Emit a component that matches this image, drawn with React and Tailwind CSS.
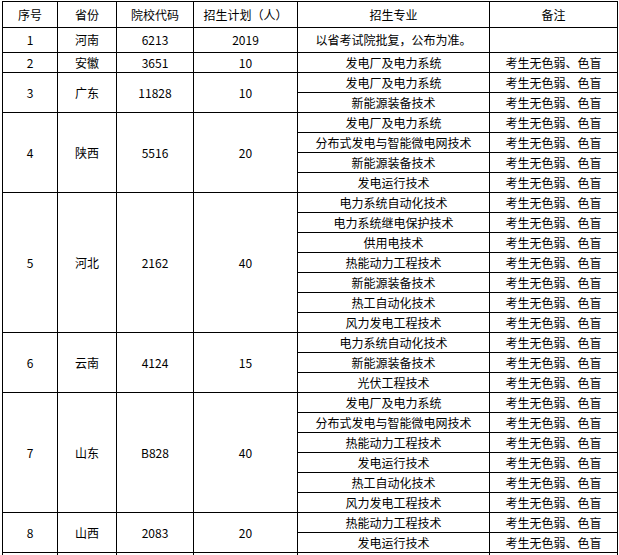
import React from 'react';

const NOTE = '考生无色弱、色盲';

const rows = [
  { no: '1', province: '河南', code: '6213', plan: '2019', majors: [['以省考试院批复，公布为准。', '']] },
  { no: '2', province: '安徽', code: '3651', plan: '10', majors: [['发电厂及电力系统', NOTE]] },
  {
    no: '3',
    province: '广东',
    code: '11828',
    plan: '10',
    majors: [['发电厂及电力系统', NOTE], ['新能源装备技术', NOTE]],
  },
  {
    no: '4',
    province: '陕西',
    code: '5516',
    plan: '20',
    majors: [
      ['发电厂及电力系统', NOTE],
      ['分布式发电与智能微电网技术', NOTE],
      ['新能源装备技术', NOTE],
      ['发电运行技术', NOTE],
    ],
  },
  {
    no: '5',
    province: '河北',
    code: '2162',
    plan: '40',
    majors: [
      ['电力系统自动化技术', NOTE],
      ['电力系统继电保护技术', NOTE],
      ['供用电技术', NOTE],
      ['热能动力工程技术', NOTE],
      ['新能源装备技术', NOTE],
      ['热工自动化技术', NOTE],
      ['风力发电工程技术', NOTE],
    ],
  },
  {
    no: '6',
    province: '云南',
    code: '4124',
    plan: '15',
    majors: [
      ['电力系统自动化技术', NOTE],
      ['新能源装备技术', NOTE],
      ['光伏工程技术', NOTE],
    ],
  },
  {
    no: '7',
    province: '山东',
    code: 'B828',
    plan: '40',
    majors: [
      ['发电厂及电力系统', NOTE],
      ['分布式发电与智能微电网技术', NOTE],
      ['热能动力工程技术', NOTE],
      ['发电运行技术', NOTE],
      ['热工自动化技术', NOTE],
      ['风力发电工程技术', NOTE],
    ],
  },
  {
    no: '8',
    province: '山西',
    code: '2083',
    plan: '20',
    majors: [
      ['热能动力工程技术', NOTE],
      ['发电运行技术', NOTE],
    ],
  },
];

const cell = 'border border-black text-center align-middle p-0 leading-none whitespace-nowrap';

export default function App() {
  return (
    <div
      className="min-h-screen bg-white pt-[1px] pl-[2px] text-[12px] text-black"
      style={{ fontFamily: '"Noto Sans CJK SC", "Liberation Sans", sans-serif' }}
    >
      <table className="table-fixed border-collapse w-[615px]">
        <colgroup>
          <col className="w-[55px]" />
          <col className="w-[59px]" />
          <col className="w-[77px]" />
          <col className="w-[104px]" />
          <col className="w-[192px]" />
          <col className="w-[128px]" />
        </colgroup>
        <thead>
          <tr className="h-[26px]">
            <th className={`${cell} font-normal`}>序号</th>
            <th className={`${cell} font-normal`}>省份</th>
            <th className={`${cell} font-normal`}>院校代码</th>
            <th className={`${cell} font-normal`}>招生计划（人）</th>
            <th className={`${cell} font-normal`}>招生专业</th>
            <th className={`${cell} font-normal`}>备注</th>
          </tr>
        </thead>
        <tbody>
          {rows.map((row) =>
            row.majors.map(([major, note], i) => (
              <tr key={`${row.no}-${i}`} className={row.no === '1' ? 'h-[25px]' : 'h-[20px]'}>
                {i === 0 ? (
                  <>
                    <td rowSpan={row.majors.length} className={cell}>{row.no}</td>
                    <td rowSpan={row.majors.length} className={cell}>{row.province}</td>
                    <td rowSpan={row.majors.length} className={cell}>{row.code}</td>
                    <td rowSpan={row.majors.length} className={cell}>{row.plan}</td>
                  </>
                ) : null}
                <td className={cell}>{major}</td>
                <td className={cell}>{note}</td>
              </tr>
            )),
          )}
          <tr className="h-[20px]">
            <td className={cell} />
            <td className={cell} />
            <td className={cell} />
            <td className={cell} />
            <td className={cell} />
            <td className={cell} />
          </tr>
        </tbody>
      </table>
    </div>
  );
}
